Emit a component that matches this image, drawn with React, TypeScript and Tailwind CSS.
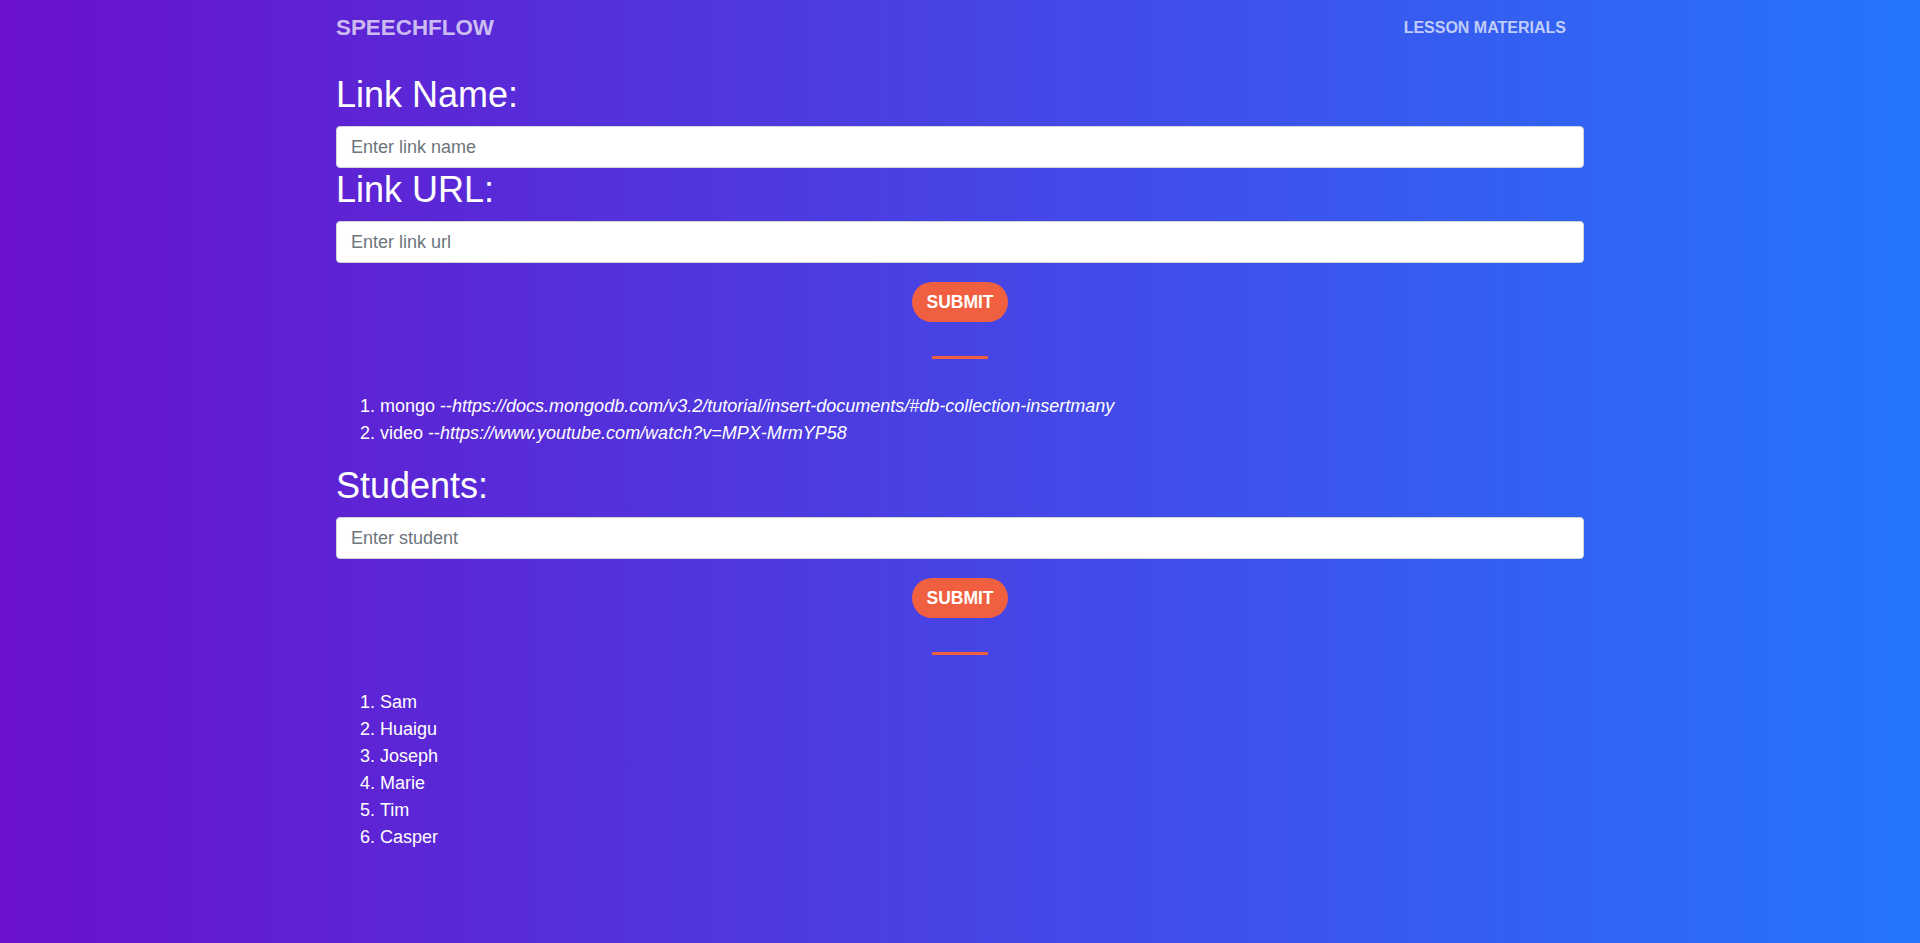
import { useState } from "react"

const links = [
  { name: "mongo", url: "https://docs.mongodb.com/v3.2/tutorial/insert-documents/#db-collection-insertmany" },
  { name: "video", url: "https://www.youtube.com/watch?v=MPX-MrmYP58" },
]

const students = ["Sam", "Huaigu", "Joseph", "Marie", "Tim", "Casper"]

function Divider() {
  return <hr className="mx-auto mt-[34px] h-[3px] w-[56px] border-0 bg-[#f05f40]" />
}

function SubmitButton() {
  return (
    <div className="mt-[19px] flex justify-center">
      <button className="h-[40px] w-[96px] rounded-full bg-[#f05f40] text-[17.5px] font-bold text-white">
        SUBMIT
      </button>
    </div>
  )
}

export default function App() {
  const [linkName, setLinkName] = useState("")
  const [linkUrl, setLinkUrl] = useState("")
  const [student, setStudent] = useState("")

  const inputClass =
    "mt-[10px] block h-[42px] w-full rounded-[4px] border border-[#ced4da] bg-white px-[14px] text-[18px] text-[#495057] outline-none placeholder:text-[#6c757d]"

  return (
    <div className="min-h-screen bg-linear-to-r/srgb from-[#6a11cb] to-[#2575fc] font-['Liberation_Sans',Arial,sans-serif]">
      <nav className="mx-auto flex h-[55px] w-[65%] items-center justify-between">
        <span className="text-[22.4px] font-bold text-white/70">SPEECHFLOW</span>
        <a className="pr-[18px] text-[16px] font-bold text-white/70">LESSON MATERIALS</a>
      </nav>

      <main className="mx-auto w-[65%] pt-[18px]">
        <h2 className="text-[36px] leading-[43px] text-white">Link Name:</h2>
        <input
          className={inputClass}
          placeholder="Enter link name"
          value={linkName}
          onChange={(e) => setLinkName(e.target.value)}
        />
        <h2 className="text-[36px] leading-[43px] text-white">Link URL:</h2>
        <input
          className={inputClass}
          placeholder="Enter link url"
          value={linkUrl}
          onChange={(e) => setLinkUrl(e.target.value)}
        />
        <SubmitButton />
        <Divider />

        <ol className="mt-[34px] list-decimal pl-[44px] text-[18px] leading-[27px] text-white">
          {links.map((link) => (
            <li key={link.name}>
              {link.name} --<em>{link.url}</em>
            </li>
          ))}
        </ol>

        <h2 className="mt-[17px] text-[36px] leading-[43px] text-white">Students:</h2>
        <input
          className={inputClass}
          placeholder="Enter student"
          value={student}
          onChange={(e) => setStudent(e.target.value)}
        />
        <SubmitButton />
        <Divider />

        <ol className="mt-[34px] list-decimal pl-[44px] text-[18px] leading-[27px] text-white">
          {students.map((s) => (
            <li key={s}>{s}</li>
          ))}
        </ol>
      </main>
    </div>
  )
}
